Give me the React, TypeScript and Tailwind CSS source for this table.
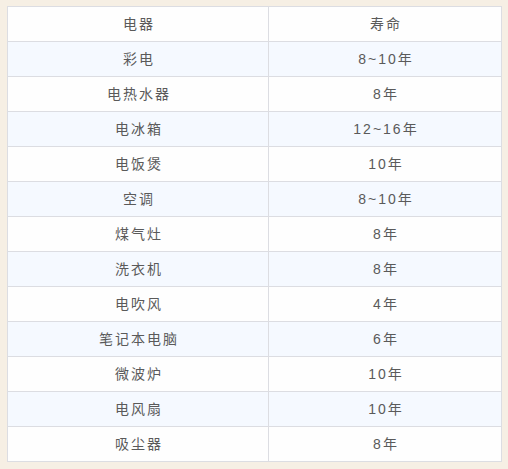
import React from "react";

const rows: [string, string][] = [
  ["彩电", "8~10年"],
  ["电热水器", "8年"],
  ["电冰箱", "12~16年"],
  ["电饭煲", "10年"],
  ["空调", "8~10年"],
  ["煤气灶", "8年"],
  ["洗衣机", "8年"],
  ["电吹风", "4年"],
  ["笔记本电脑", "6年"],
  ["微波炉", "10年"],
  ["电风扇", "10年"],
  ["吸尘器", "8年"],
];

export default function App() {
  return (
    <div
      className="w-[508px] h-[469px] bg-[#f6efe4] pt-[6px] pl-[7px]"
      style={{ fontFamily: '"Liberation Sans", "Noto Sans CJK SC", sans-serif' }}
    >
      <div className="w-[495px] border-b border-[#dcdde2] text-[14px] text-[#5a5a5a] tracking-[2px]">
        <div className="flex h-[35px] border-t border-x border-[#dcdde2] bg-[#fefefe]">
          <div className="w-[261px] border-r border-[#dcdde2] flex items-center justify-center pl-[2px]">电器</div>
          <div className="flex-1 flex items-center justify-center pl-[2px]">寿命</div>
        </div>
        {rows.map(([a, b], i) => (
          <div
            key={a}
            className={
              "flex h-[35px] border-t border-x border-[#dcdde2] " +
              (i % 2 === 0 ? "bg-[#f5f9ff]" : "bg-[#fefefe]")
            }
          >
            <div className="w-[261px] border-r border-[#dcdde2] flex items-center justify-center pl-[2px]">{a}</div>
            <div className="flex-1 flex items-center justify-center pl-[2px]">{b}</div>
          </div>
        ))}
      </div>
    </div>
  );
}
